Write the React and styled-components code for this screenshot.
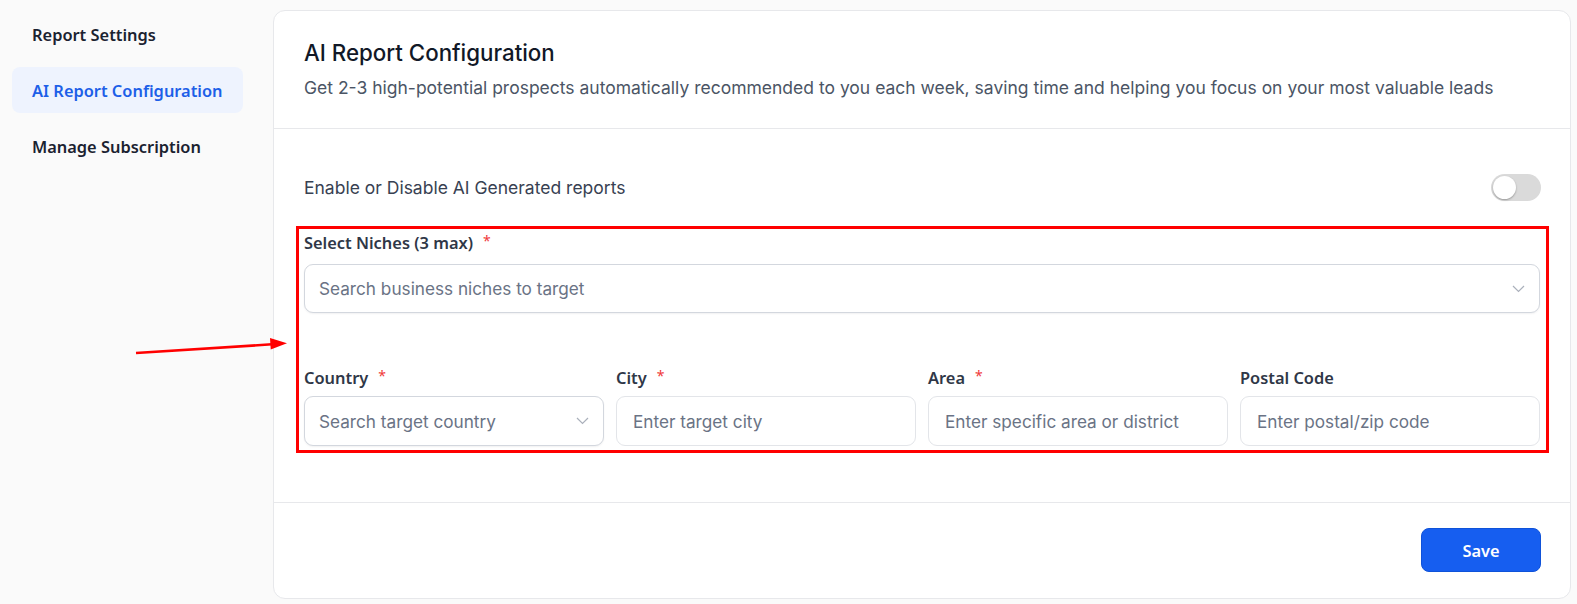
import React, { useState } from "react";
import styled, { createGlobalStyle } from "styled-components";

const GlobalStyle = createGlobalStyle`
  * { box-sizing: border-box; }
  body {
    margin: 0;
    background: #fafafa;
    font-family: Inter, "Noto Sans", sans-serif;
    color: #111827;
  }
`;

const Page = styled.div`
  position: relative;
  display: flex;
  align-items: flex-start;
  min-height: 604px;
  padding: 10px 6px 5px 0;
`;

const Sidebar = styled.nav`
  width: 273px;
  flex-shrink: 0;
  display: flex;
  flex-direction: column;
  gap: 10px;
  padding: 1px 30px 0 12px;
`;

const NavItem = styled.div`
  height: 46px;
  display: flex;
  align-items: center;
  padding-left: 20px;
  border-radius: 8px;
  font-family: "Noto Sans", sans-serif;
  font-size: 16.4px;
  font-weight: 600;
  color: ${(p) => (p.$active ? "#1d5fe8" : "#1b2230")};
  background: ${(p) => (p.$active ? "#eef3fe" : "transparent")};
`;

const Card = styled.section`
  flex: 1;
  background: #fff;
  border: 1px solid #e7e8eb;
  border-radius: 12px;
  display: flex;
  flex-direction: column;
`;

const Header = styled.header`
  padding: 28px 30px 28px;
  border-bottom: 1px solid #e7e8eb;
`;

const Title = styled.h1`
  margin: 0;
  font-size: 22.3px;
  line-height: 28px;
  font-weight: 500;
  color: #111827;
`;

const Subtitle = styled.p`
  margin: 9px 0 0;
  font-size: 17.5px;
  line-height: 24px;
  color: #4b5565;
`;

const Body = styled.div`
  padding: 45px 30px 56px;
  border-bottom: 1px solid #e7e8eb;
`;

const ToggleRow = styled.div`
  display: flex;
  align-items: center;
  justify-content: space-between;
  height: 27px;
  font-size: 17.5px;
  color: #384152;
`;

const Switch = styled.button`
  position: relative;
  width: 50px;
  height: 27px;
  margin-right: -1px;
  border: none;
  border-radius: 14px;
  background: ${(p) => (p.$on ? "#155eef" : "#dadada")};
  cursor: pointer;
  padding: 0;

  &::after {
    content: "";
    position: absolute;
    top: 2px;
    left: ${(p) => (p.$on ? "25px" : "2px")};
    width: 23px;
    height: 23px;
    border-radius: 50%;
    background: #fff;
    box-shadow: 0 1px 2px rgba(0, 0, 0, 0.3);
  }
`;

const FormGroup = styled.div`
  position: relative;
  margin-top: 31px;

  &::after {
    content: "";
    position: absolute;
    top: -6px;
    bottom: -7px;
    left: -8px;
    right: -9px;
    border: 3px solid #ff0000;
    pointer-events: none;
  }
`;

const Label = styled.label`
  display: flex;
  gap: 10px;
  height: 20px;
  align-items: center;
  font-family: "Noto Sans", sans-serif;
  font-size: 16.4px;
  font-weight: 600;
  color: #2f3747;
  margin-bottom: ${(p) => p.$gap || 12}px;
`;

const Required = styled.span`
  color: #f03a3a;
  font-size: 14px;
  font-weight: 400;
  position: relative;
  top: -2px;
`;

const SelectBox = styled.div`
  height: ${(p) => p.$h || 49}px;
  display: flex;
  align-items: center;
  justify-content: space-between;
  padding: 0 14px 0 14px;
  border: 1px solid #d3d7de;
  border-radius: 9px;
  box-shadow: 0 1px 2px rgba(16, 24, 40, 0.06);
  background: #fff;
  font-size: 17.2px;
  color: #6a7385;
`;

const Grid = styled.div`
  display: grid;
  grid-template-columns: repeat(4, 1fr);
  gap: 12px;
  margin-top: 54px;
`;

const Field = styled.div`
  display: flex;
  flex-direction: column;
`;

const TextInput = styled.input`
  height: 50px;
  width: 100%;
  padding: 0 16px;
  border: 1px solid #e3e5e9;
  border-radius: 9px;
  font-family: Inter, sans-serif;
  font-size: 17.2px;
  color: #111827;
  outline: none;
  background: #fff;

  &::placeholder {
    color: #6a7385;
  }
`;

const Footer = styled.footer`
  display: flex;
  justify-content: flex-end;
  padding: 25px 29px 26px;
`;

const SaveButton = styled.button`
  width: 120px;
  height: 44px;
  border: 1px solid #0f52d9;
  border-radius: 8px;
  background: #165ef0;
  color: #fff;
  font-family: "Noto Sans", sans-serif;
  font-size: 16.4px;
  font-weight: 600;
  cursor: pointer;
`;

const Arrow = styled.svg`
  position: absolute;
  left: 130px;
  top: 330px;
  pointer-events: none;
`;

const Chevron = () => (
  <svg width="13" height="8" viewBox="0 0 13 8" fill="none">
    <path d="M1 1l5.5 5.5L12 1" stroke="#aab0bb" strokeWidth="1.2" />
  </svg>
);

const App = () => {
  const [enabled, setEnabled] = useState(false);
  return (
    <Page>
      <GlobalStyle />
      <Sidebar>
        <NavItem>Report Settings</NavItem>
        <NavItem $active>AI Report Configuration</NavItem>
        <NavItem>Manage Subscription</NavItem>
      </Sidebar>
      <Card>
        <Header>
          <Title>AI Report Configuration</Title>
          <Subtitle>
            Get 2-3 high-potential prospects automatically recommended to you
            each week, saving time and helping you focus on your most valuable
            leads
          </Subtitle>
        </Header>
        <Body>
          <ToggleRow>
            <span>Enable or Disable AI Generated reports</span>
            <Switch $on={enabled} onClick={() => setEnabled(!enabled)} />
          </ToggleRow>
          <FormGroup>
            <Label>
              Select Niches (3 max) <Required>*</Required>
            </Label>
            <SelectBox>
              <span>Search business niches to target</span>
              <Chevron />
            </SelectBox>
            <Grid>
              <Field>
                <Label $gap={9}>
                  Country <Required>*</Required>
                </Label>
                <SelectBox $h={50}>
                  <span>Search target country</span>
                  <Chevron />
                </SelectBox>
              </Field>
              <Field>
                <Label $gap={9}>
                  City <Required>*</Required>
                </Label>
                <TextInput placeholder="Enter target city" />
              </Field>
              <Field>
                <Label $gap={9}>
                  Area <Required>*</Required>
                </Label>
                <TextInput placeholder="Enter specific area or district" />
              </Field>
              <Field>
                <Label $gap={9}>Postal Code</Label>
                <TextInput placeholder="Enter postal/zip code" />
              </Field>
            </Grid>
          </FormGroup>
        </Body>
        <Footer>
          <SaveButton>Save</SaveButton>
        </Footer>
      </Card>
      <Arrow width="165" height="30" viewBox="0 0 165 30">
        <line x1="6" y1="23" x2="142" y2="14.3" stroke="#ff0000" strokeWidth="2.6" />
        <polygon points="157,13.3 140,8 140.7,19.5" fill="#ff0000" />
      </Arrow>
    </Page>
  );
};

export default App;
